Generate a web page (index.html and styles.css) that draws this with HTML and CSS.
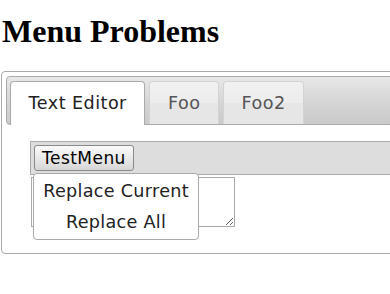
FILE: index.html
```html
<!DOCTYPE html>
<html>
<head>
<meta charset="utf-8">
<title>Menu Problems</title>
<link rel="stylesheet" href="styles.css">
</head>
<body>
<h1 class="title">Menu Problems</h1>
<div class="tabs">
  <ul class="tabs-nav">
    <li class="tab tab-active"><a class="tab-link">Text Editor</a></li>
    <li class="tab"><a class="tab-link">Foo</a></li>
    <li class="tab"><a class="tab-link">Foo2</a></li>
  </ul>
  <div class="panel">
    <div class="toolbar">
      <button class="menu-btn" type="button">TestMenu</button>
      <ul class="menu">
        <li class="menu-item">Replace Current</li>
        <li class="menu-item">Replace All</li>
      </ul>
    </div>
    <textarea class="editor"></textarea>
  </div>
</div>
</body>
</html>
```

FILE: styles.css
```css
html, body {
  overflow: hidden;
}
body {
  margin: 0;
  padding: 0 0 0 1px;
  background: #fff;
}
.title {
  margin: 12.5px 0 21.5px;
  padding-left: 1px;
  font-family: "Liberation Serif", "Times New Roman", serif;
  font-weight: bold;
  font-size: 32px;
  line-height: 37px;
  color: #000;
}
.tabs {
  width: 440px;
  box-sizing: border-box;
  border: 1px solid #aaaaaa;
  border-radius: 4px;
  padding: 3.5px;
  background: #fff;
  font-family: "DejaVu Sans", Verdana, sans-serif;
  font-size: 17.6px;
}
.tabs-nav {
  display: flex;
  align-items: flex-end;
  list-style: none;
  margin: 0;
  padding: 3.5px 3.5px 0;
  border: 1px solid #aaaaaa;
  border-radius: 4px;
  background: linear-gradient(to bottom, #e8e8e8 0%, #d6d6d6 50%, #cacaca 100%);
}
.tab {
  margin: 1px 4px 0 0;
  border: 1px solid #d3d3d3;
  border-bottom: 0;
  border-radius: 4px 4px 0 0;
  background: linear-gradient(to bottom, #f1f1f1 0%, #ececec 50%, #e6e6e6 51%, #e6e6e6 100%);
}
.tab-link {
  display: block;
  padding: 8.8px 17.6px;
  line-height: 24px;
  letter-spacing: 0.45px;
  color: #555555;
  text-decoration: none;
}
.tab-active {
  background: #fff;
  border-color: #aaaaaa;
  margin-bottom: -1px;
  padding-bottom: 1px;
}
.tab-active .tab-link {
  color: #212121;
}
.panel {
  padding: 16.5px 24.6px 22.5px;
}
.toolbar {
  position: relative;
  border: 1px solid #aaaaaa;
  background: #dddddd;
  padding: 3px;
}
.menu-btn {
  display: block;
  margin: 0;
  padding: 2px 7px;
  border: 1px solid #8a8a8a;
  border-radius: 3px;
  background: linear-gradient(to bottom, #fafafa 0%, #e6e6e6 60%, #d6d6d6 100%);
  font-family: "DejaVu Sans", Verdana, sans-serif;
  font-size: 17px;
  line-height: 20px;
  letter-spacing: 0.45px;
  color: #000;
}
.menu {
  position: absolute;
  left: 2px;
  top: 30.5px;
  z-index: 5;
  width: 166px;
  box-sizing: border-box;
  list-style: none;
  margin: 0;
  padding: 1.5px 0;
  border: 1px solid #aaaaaa;
  border-radius: 4px;
  background: #fff;
}
.menu-item {
  padding: 2.5px 0;
  line-height: 26px;
  text-align: center;
  font-size: 17.6px;
  letter-spacing: 0.3px;
  color: #222222;
  white-space: nowrap;
}
.editor {
  display: block;
  margin: 2px 0 0 1px;
  width: 204px;
  height: 50px;
  box-sizing: border-box;
  border: 1px solid #a9a9a9;
  padding: 2px;
  background: #fff;
}
```
